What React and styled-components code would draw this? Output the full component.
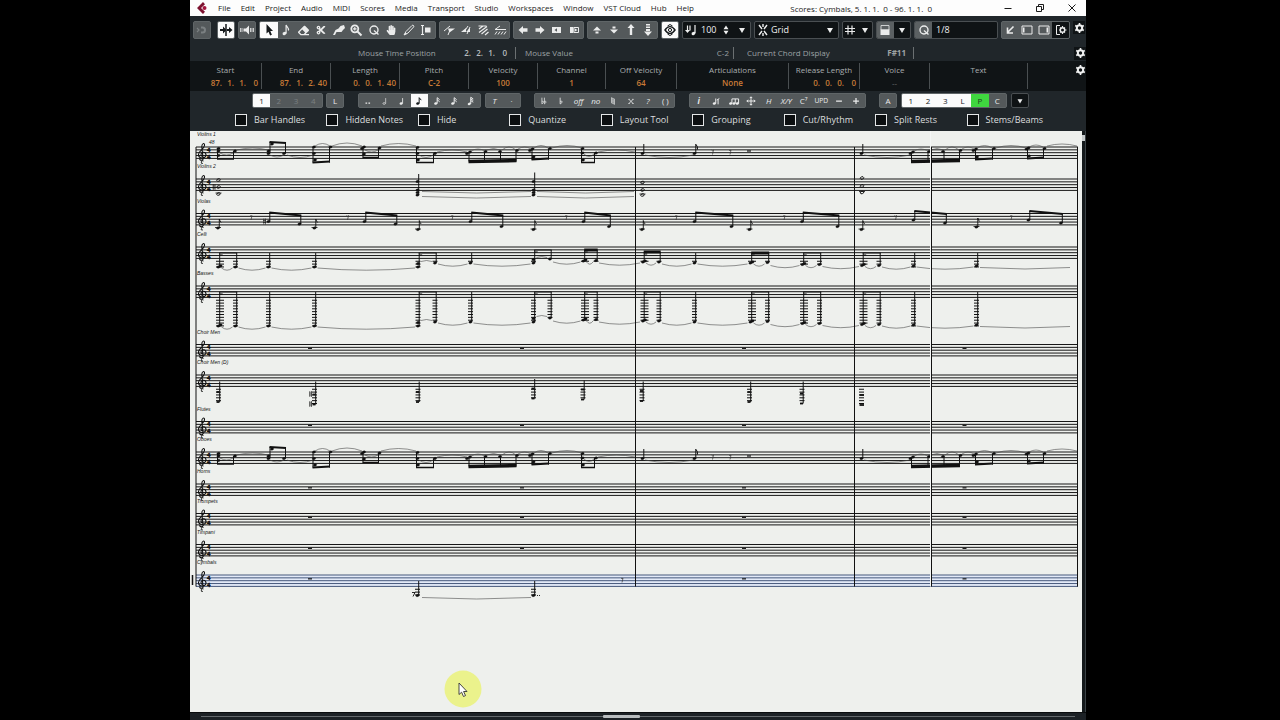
import React from 'react';
import styled, { createGlobalStyle, css } from 'styled-components';
import { FaHandPaper, FaEraser, FaCut } from 'react-icons/fa';

const GlobalStyle = createGlobalStyle`
  * {
    box-sizing: border-box;
  }

  body {
    margin: 0;
    background: #000;
    font-family: 'Open Sans', 'Noto Sans', sans-serif;
  }

  button, input, select {
    font-family: inherit;
    color: inherit;
    margin: 0;
    padding: 0;
    border: 0;
    background: none;
  }
`;

const Screen = styled.div`
  display: grid;
  grid-template-columns: 190fr 896fr 194fr;
  min-height: 100vh;
  background: #000;
`;

const Window = styled.div`
  grid-column: 2;
  display: flex;
  flex-direction: column;
  min-width: 0;
  overflow: hidden;
  background: #20262a;
  color: #d5d8d9;
`;

const TitleBar = styled.header`
  display: flex;
  align-items: center;
  height: 16px;
  padding: 0 8px 0 6px;
  background: #fdfdfd;
  color: #1b1b1b;
  font-size: 8px;
`;

const Logo = styled.svg`
  width: 12px;
  height: 12px;
  margin-right: 10px;
`;

const Menu = styled.nav`
  display: flex;
  gap: 10px;
`;

const MenuItem = styled.button`
  font-size: 8px;
  line-height: 16px;
  white-space: nowrap;
`;

const WindowTitle = styled.div`
  flex: 1;
  text-align: right;
  white-space: pre;
`;

const WindowControls = styled.div`
  display: flex;
  gap: 20px;
  margin-left: 70px;
`;

const WindowButton = styled.button`
  display: flex;
  width: 12px;
  height: 12px;
`;

const Toolbar = styled.div`
  display: flex;
  gap: 3px;
  height: 28px;
  padding: 5px 0 5px 3px;
  overflow: hidden;
`;

const Group = styled.div`
  display: flex;
  flex: none;
  width: ${props => props.$width}px;
  margin-left: ${props => props.$before || 0}px;
  border: 1px solid ${props => (props.$dark ? '#4a4f52' : '#5f6567')};
  border-radius: 2px;
  overflow: hidden;
  background: ${props => (props.$dark ? '#0f1315' : '#54595b')};
`;

const tones = {
  on: css`
    background: #fbfbfb;
    color: #15191b;
  `,
  green: css`
    background: #3fd63f;
    color: #1d3c1d;
  `,
  dark: css`
    background: #0f1315;
  `,
  lit: css`
    background: #5b6062;
  `,
  dim: css`
    color: #7b8082;
  `,
};

const ToolButton = styled.button`
  display: flex;
  flex: ${props => (props.$fixed ? 'none' : '1')};
  align-items: center;
  justify-content: center;
  width: ${props => (props.$fixed ? '17px' : 'auto')};
  min-width: 0;
  color: #ebecec;
  font-size: 8px;
  line-height: 12px;
  ${props => tones[props.$tone]}
`;

const Glyph = styled.svg`
  flex: none;
  width: ${props => (props.$small ? 10 : 12)}px;
  height: ${props => (props.$small ? 10 : 12)}px;
  overflow: visible;
`;

const Field = styled.label`
  display: flex;
  flex: 1;
  align-items: center;
  gap: 2px;
  min-width: 0;
  padding: 0 2px;
  color: #f0f1f1;
`;

const TextBox = styled.input`
  flex: 1;
  width: 0;
  min-width: 0;
  padding-left: 2px;
  font-size: 9px;
  line-height: 14px;
`;

const Select = styled.select`
  flex: 1;
  width: 0;
  min-width: 0;
  font-size: 9px;
  line-height: 14px;
  appearance: none;
`;

const StatusLine = styled.div`
  display: grid;
  grid-template-columns: 326fr 218fr 180fr 160fr 12px;
  align-items: center;
  height: 17px;
  padding-top: 1px;
  color: #9da2a4;
  font-size: 8px;
  line-height: 12px;
`;

const StatusCell = styled.div`
  display: flex;
  justify-content: space-between;
  padding: 0 ${props => props.$end}px 0 ${props => props.$start}px;
  border-right: 1px solid #6b7072;
  white-space: nowrap;
`;

const GearButton = styled.button`
  display: flex;
  align-items: center;
  width: 12px;
  height: 13px;
  overflow: hidden;
  background: #0f1315;
  color: #f0f1f1;
`;

const InfoLine = styled.div`
  display: grid;
  grid-template-columns: 72fr 69fr 69fr 69fr 69fr 68fr 71fr 112fr 71fr 70fr 98fr 46fr 12px;
  height: 30px;
  padding: 2px 0;
  background: #101416;
  font-size: 8px;
`;

const InfoCell = styled.div`
  display: flex;
  flex-direction: column;
  align-items: center;
  border-right: 1px solid #4a4f51;
  color: #a9adaf;
  line-height: 13px;
  white-space: nowrap;
`;

const InfoValue = styled.span`
  color: ${props => (props.$muted ? '#6a6e70' : '#c97b36')};
  font-weight: ${props => (props.$muted ? 400 : 600)};
`;

const Time = styled.span`
  display: flex;
  align-self: flex-end;
  padding-right: 3px;
  color: ${props => (props.$plain ? '#b9bdbf' : '#c97b36')};
  font-weight: 600;
`;

const TimePart = styled.span`
  width: 12px;
  text-align: right;
`;

const SymbolBar = styled.div`
  display: flex;
  height: 19px;
  padding: 2px 0 2px 62px;
  overflow: hidden;
`;

const Filters = styled.div`
  display: grid;
  grid-template-columns: repeat(9, 1fr);
  align-items: center;
  height: 21px;
  padding: 0 28px 1px 45px;
`;

const Filter = styled.label`
  display: flex;
  align-items: center;
  gap: 7px;
  color: #dcdedf;
  font-size: 9px;
  line-height: 14px;
  white-space: nowrap;
`;

const CheckBox = styled.input`
  flex: none;
  width: 12px;
  height: 12px;
  border: 1px solid #e4e6e7;
  background: #0c0f11;
  appearance: none;
`;

const Workspace = styled.div`
  display: flex;
  flex: 1;
  min-height: 0;
`;

const Page = styled.main`
  position: relative;
  flex: 1;
  min-width: 0;
  overflow: hidden;
  background: #eef0ed;
`;

const Sheet = styled.svg`
  display: block;
  width: 100%;
  font-family: 'Liberation Sans', Arial, sans-serif;
`;

const Pointer = styled.svg`
  position: absolute;
  left: calc(31% - 23px);
  bottom: 4px;
  width: 38px;
  height: 38px;
`;

const VerticalScroll = styled.div`
  width: 4px;
  padding-top: 4px;
  border-right: 1px solid #3b4246;
  background: #14191b;
`;

const VerticalThumb = styled.div`
  height: 6px;
  background: #c6cacb;
`;

const HorizontalScroll = styled.div`
  display: flex;
  align-items: center;
  height: 8px;
  padding: 0 11px;
  border-top: 1px solid #0a0c0d;
  background: #1c2125;
`;

const Track = styled.div`
  flex: ${props => props.$share};
  height: 1px;
  background: #63686b;
`;

const HorizontalThumb = styled.div`
  width: 37px;
  height: 3px;
  border-radius: 1px;
  background: #b9bdbf;
`;

const stroke = { fill: 'none', stroke: 'currentColor', strokeWidth: 1.2 };
const solid = { fill: 'currentColor', stroke: 'none' };

const noteHead = (x, y) => <ellipse cx={x} cy={y} rx="2" ry="1.5" transform={`rotate(-20 ${x} ${y})`} {...solid} />;

const glyphs = {
  constrain: (
    <>
      <path d="M5 2.500h1.500a3.500 3.500 0 0 1 0 7H5V7.500h1.500a1.500 1.500 0 0 0 0-3H5z" {...solid} />
      <path d="M1 4l2 2-2 2" {...stroke} />
    </>
  ),
  autoscroll: (
    <>
      <path d="M6 0v12" {...stroke} strokeWidth="1.500" />
      <path d="M0 5h3V2.500L6.500 6 3 9.500V7H0zM7 5h2V3l3.500 3L9 9V7H7z" {...solid} />
    </>
  ),
  speaker: (
    <>
      <path d="M2.500 4.500h2.500L8 1.500v9L5 7.500H2.500z" {...solid} />
      <path d="M1 4v4M-.5 4v4M9.500 4v4M11 4v4M12.500 4v4" {...stroke} strokeWidth=".8" />
    </>
  ),
  arrow: <path d="M3.500 0v9.500l2-1.800 1.600 3.800 1.800-.8L7.300 7.100H10z" {...solid} />,
  note: (
    <>
      {noteHead(4.500, 9.500)}
      <path d="M6.100 9.500V1c.5 2 3 2.500 2.300 5.500" {...stroke} />
    </>
  ),
  glue: <path d="M0 11l2.500-5 3-1.500L7.500 2 11 1l1 3-2 2-1.500 2H5.500L3.500 8 2 11z" {...solid} />,
  zoom: (
    <>
      <circle cx="4.800" cy="4.800" r="3.500" {...stroke} strokeWidth="1.800" />
      <path d="M7.500 7.500L11.500 11.500" {...stroke} strokeWidth="2" />
      <path d="M3 4.800h3.600M4.800 3v3.600" {...stroke} />
    </>
  ),
  quantize: (
    <>
      <circle cx="6" cy="6" r="4" {...stroke} strokeWidth="1.400" />
      <path d="M6 6.500l4.500 4" {...stroke} strokeWidth="1.400" />
    </>
  ),
  pencil: (
    <>
      <path d="M1 11l2-3.500L9 1.500c1-1 2.500.5 1.600 1.500L5 9z" {...stroke} strokeWidth="1" />
      <path d="M1 11l3-1L2.500 8.500z" {...solid} />
    </>
  ),
  trim: (
    <>
      <path d="M1 1.500h3M1 10.500h3M2.500 1.500v9" {...stroke} />
      <path d="M5 3.500h5.500v5H5z" {...solid} />
    </>
  ),
  scissorNote: (
    <>
      <path d="M1 7l6-5M5 11l2-5" {...stroke} strokeWidth="1" />
      <path d="M5 4.500h7L6.500 8.500z" {...solid} />
    </>
  ),
  splitNote: (
    <>
      <path d="M4 8l4-6M7 10l3-7" {...stroke} strokeWidth="1" />
      <path d="M1 8l5-4v4zM6 8l4-4v4z" {...solid} />
    </>
  ),
  hatch: <path d="M2 5l4-3M2 8.500l8-6M4.500 10l6-5M8 11l3.500-3M1.500 2h8" {...stroke} />,
  hatchFlat: <path d="M1 5.500h11M1 5.500L6 2M1 10.500l2-3M4 10.500l2-3M7 10.500l2-3M10 10.500l2-3" {...stroke} strokeWidth="1" />,
  left: <path d="M1.500 6L6 2v2.300h4.500v3.400H6V10z" {...solid} />,
  right: <path d="M10.500 6L6 2v2.300H1.500v3.400H6V10z" {...solid} />,
  boxLeft: (
    <>
      <path fillRule="evenodd" d="M1 3h6v6H1zM6 4.200L3.500 6 6 7.800z" {...solid} />
      <path d="M7 3h3v6H7z" {...solid} />
    </>
  ),
  boxRight: (
    <>
      <path d="M2 3h3.500v6H2z" {...solid} />
      <path d="M6 3.500h4.500v5H6z" {...stroke} strokeWidth="1" />
      <path d="M7 4.500L9.500 6 7 7.500z" {...solid} />
    </>
  ),
  up: <path d="M6 2.500L10 6.500H2zM4.500 7.500h3v2h-3z" {...solid} />,
  down: <path d="M6 9.500L2 5.500h8zM4.500 2.500h3v2h-3z" {...solid} />,
  upLong: <path d="M6 0l3.500 4H7.200v7H4.800V4H2.500z" {...solid} />,
  downLong: <path d="M6 12L2 7.500h8zM4 5h4v2H4zM4 2.500h4V4H4zM4 0h4v1.500H4z" {...solid} />,
  eye: (
    <>
      <path d="M1 6c3-4.500 7-4.500 10 0-3 4.500-7 4.500-10 0z" {...stroke} strokeWidth="1.400" />
      <circle cx="6" cy="6" r="1.600" {...stroke} strokeWidth="1" />
      <path d="M3.500 2L6 .5 8.500 2M3.500 10L6 11.500 8.500 10" {...stroke} strokeWidth="1" />
    </>
  ),
  insertVelocity: (
    <>
      <path d="M2.500 1.500v6M5 1.500v5M10 1v8" {...stroke} />
      <path d="M0 6h5L2.500 9z" {...solid} />
      {noteHead(8.500, 9.500)}
    </>
  ),
  spin: <path d="M6 .5L9 5H3zM6 11.500L3 7h6z" {...solid} />,
  caret: <path d="M3 4h6L6 9z" {...solid} />,
  snap: <path d="M6 0v3M6 9v3M2 1l3 4M10 1L7 5M2 11l3-4M10 11L7 7" {...stroke} strokeWidth="1.400" />,
  hash: <path d="M4 1.500v9M8 1.500v9M1 4.500h10M1 7.500h10" {...stroke} />,
  zones: (
    <>
      <path d="M2 1.500h8V6H2z" {...stroke} strokeWidth=".8" />
      <path d="M1.500 5.500h9V11h-9z" {...solid} />
    </>
  ),
  corner: <path d="M9.500 2.500L4 8M3.500 3.500V9H9" {...stroke} strokeWidth="1.600" />,
  paneLeft: (
    <>
      <path d="M1 2h10v8H1z" {...stroke} strokeWidth="1" />
      <path d="M2 3.500h1.500v5H2z" {...solid} />
    </>
  ),
  paneRight: (
    <>
      <path d="M1 2h10v8H1z" {...stroke} strokeWidth="1" />
      <path d="M8.500 3.500H10v5H8.500z" {...solid} />
    </>
  ),
  setup: (
    <>
      <path d="M5 1.500H1.500v9H5" {...stroke} strokeWidth="1" />
      <circle cx="7.500" cy="6" r="2.200" {...stroke} strokeWidth="1.400" />
      <path d="M7.500 2v1.500M7.500 8.500V10M4 6h1M10 6h1.500M5 3.500l1 1M10 3.500l-1 1M5 8.500l1-1M10 8.500l-1-1" {...stroke} />
    </>
  ),
  gear: (
    <>
      <circle cx="6.500" cy="6" r="2.700" {...stroke} strokeWidth="2" />
      <path d="M6.500 1v2M6.500 9v2M2.200 3.500l1.700 1M9.100 7.500l1.700 1M2.200 8.500l1.700-1M9.100 4.500l1.700-1" {...stroke} strokeWidth="1.600" />
    </>
  ),
  whole: <path d="M3 8.500h2M6.500 8.500h2" {...stroke} strokeWidth="1.500" />,
  half: (
    <>
      <ellipse cx="5" cy="9" rx="1.500" ry="1" {...stroke} strokeWidth=".8" />
      <path d="M6.800 9V2.500" {...stroke} strokeWidth=".8" />
    </>
  ),
  quarter: (
    <>
      {noteHead(5, 9)}
      <path d="M6.700 9V2.500" {...stroke} strokeWidth="1" />
    </>
  ),
  eighth: (
    <>
      {noteHead(4.500, 9)}
      <path d="M6.200 9V2l2.500 3" {...stroke} />
    </>
  ),
  sixteenth: (
    <>
      {noteHead(4.500, 9)}
      <path d="M6.200 9V2l3 2.500M6.200 4.500l3 2.500" {...stroke} />
    </>
  ),
  thirtySecond: (
    <>
      {noteHead(4, 9.500)}
      <path d="M5.700 9.500V1.500l3 2M5.700 3.500l3 2M5.700 5.500l3 2" {...stroke} />
    </>
  ),
  flat: <path d="M5 2v7.500c3-1.500 3.500-4 0-3" {...stroke} strokeWidth="1" />,
  doubleFlat: <path d="M3.500 2v7.500c2.500-1.500 2.500-4 0-3M6.500 2v7.500c2.500-1.500 2.500-4 0-3" {...stroke} strokeWidth=".9" />,
  natural: <path d="M4.500 1.500v7h3M7.500 10.500v-7h-3M4.500 6h3" {...stroke} strokeWidth="1" />,
  doubleSharp: <path d="M3.500 4l5 5M8.500 4l-5 5M3 4h1.500M7.500 4H9M3 9h1.500M7.500 9H9" {...stroke} strokeWidth="1" />,
  flipStems: (
    <>
      {noteHead(4, 9)}
      <path d="M5.700 9V3M8.500 10V4M7 5l3-2" {...stroke} />
    </>
  ),
  beamed: (
    <>
      {noteHead(2, 9)}
      {noteHead(6, 9)}
      <path d="M3.500 9V3.500h8V9M7.500 9V3.500" {...stroke} />
      {noteHead(10, 9)}
    </>
  ),
  move: <path d="M6 1v10M1 6h10M4.500 2.500L6 1l1.500 1.500M4.500 9.500L6 11l1.500-1.500M2.500 4.500L1 6l1.500 1.500M9.500 4.500L11 6 9.500 7.500" {...stroke} />,
  minus: <path d="M2.500 6h7" {...stroke} strokeWidth="1.500" />,
  plus: <path d="M2.500 6h7M6 2.500v7" {...stroke} strokeWidth="1.500" />,
  minimize: <path d="M2.500 6.500h7" {...stroke} strokeWidth="1" />,
  restore: <path d="M2.500 4.500h5v5h-5zM4.500 4.500v-2h5v5h-2" {...stroke} strokeWidth="1" />,
  close: <path d="M2.500 2.500l7 7M9.500 2.500l-7 7" {...stroke} strokeWidth="1" />,
};

const Icon = ({ name, small }) => (
  <Glyph viewBox="0 0 12 12" aria-hidden="true" $small={small}>{glyphs[name]}</Glyph>
);

const IconGroup = ({ width, before, dark, small, items }) => (
  <Group $width={width} $before={before} $dark={dark}>
    {items.map(([label, content, tone]) => (
      <ToolButton key={label} type="button" aria-label={label} $tone={tone}>
        {typeof content === 'string' && glyphs[content] ? <Icon name={content} small={small} /> : content}
      </ToolButton>
    ))}
  </Group>
);

const menus = ['File', 'Edit', 'Project', 'Audio', 'MIDI', 'Scores', 'Media', 'Transport', 'Studio', 'Workspaces', 'Window', 'VST Cloud', 'Hub', 'Help'];

const tools = [
  ['Object Selection', 'arrow', 'on'],
  ['Insert Note', 'note'],
  ['Erase', <FaEraser size={11} />],
  ['Split', <FaCut size={10} />],
  ['Glue', 'glue'],
  ['Zoom', 'zoom'],
  ['Display Quantize', 'quantize'],
  ['Hand', <FaHandPaper size={10} />],
  ['Export', 'pencil'],
  ['Trim', 'trim'],
];

const noteEdits = [
  ['Cut Notes', 'scissorNote'],
  ['Split Notes', 'splitNote'],
  ['Crescendo', 'hatch'],
  ['Hairpin', 'hatchFlat'],
];

const nudges = [
  ['Move Left', 'left'],
  ['Move Right', 'right'],
  ['Start Left', 'boxLeft'],
  ['End Right', 'boxRight'],
];

const transposes = [
  ['Step Up', 'up'],
  ['Step Down', 'down'],
  ['Octave Up', 'upLong'],
  ['Octave Down', 'downLong'],
];

const info = [
  { label: 'Start', time: ['87.', '1.', '1.', '0'] },
  { label: 'End', time: ['87.', '1.', '2.', '40'] },
  { label: 'Length', time: ['0.', '0.', '1.', '40'] },
  { label: 'Pitch', value: 'C-2' },
  { label: 'Velocity', value: '100' },
  { label: 'Channel', value: '1' },
  { label: 'Off Velocity', value: '64' },
  { label: 'Articulations', value: 'None' },
  { label: 'Release Length', time: ['0.', '0.', '0.', '0'] },
  { label: 'Voice', value: '--', muted: true },
  { label: 'Text', value: '' },
];

const filters = ['Bar Handles', 'Hidden Notes', 'Hide', 'Quantize', 'Layout Tool', 'Grouping', 'Cut/Rhythm', 'Split Rests', 'Stems/Beams'];

const TimeValue = ({ parts, plain }) => (
  <Time $plain={plain}>
    {parts.map((part, i) => <TimePart key={i}>{part} </TimePart>)}
  </Time>
);

// ---- score ----

const INK = '#111';
const GAP = 2.85;

const staves = [
  { name: 'Violins 1', y: 16, label: 5 },
  { name: 'Violins 2', y: 48, label: 37 },
  { name: 'Violas', y: 82.5, label: 72 },
  { name: 'Celli', y: 116, label: 105 },
  { name: 'Basses', y: 155, label: 144 },
  { name: 'Choir Men', y: 213.5, label: 203, resting: true },
  { name: 'Choir Men (D)', y: 244, label: 233 },
  { name: 'Flutes', y: 290.5, label: 280, resting: true },
  { name: 'Oboes', y: 321, label: 310 },
  { name: 'Horns', y: 353, label: 342, resting: true },
  { name: 'Trumpets', y: 382.5, label: 372, resting: true },
  { name: 'Timpani', y: 413.5, label: 403, resting: true },
  { name: 'Cymbals', y: 444, label: 433, selected: true },
];

const Head = ({ x, y, open }) => (
  <ellipse
    cx={x}
    cy={y}
    rx="1.8"
    ry="1.2"
    transform={`rotate(-18 ${x} ${y})`}
    fill={open ? 'none' : INK}
    stroke={INK}
    strokeWidth={open ? 0.9 : 0.2}
  />
);

const Stem = ({ x, from, to }) => <path d={`M${x} ${from}V${to}`} stroke={INK} strokeWidth="1" />;

const Beam = ({ x1, y1, x2, y2, weight = 1.5 }) => (
  <path d={`M${x1 - 0.5} ${y1}L${x2 + 0.5} ${y2}`} stroke={INK} strokeWidth={weight} />
);

const Slur = ({ x1, x2, y, bend }) => (
  <path d={`M${x1} ${y}Q${(x1 + x2) / 2} ${y + bend * 2} ${x2} ${y}`} fill="none" stroke="#4a4a4a" strokeWidth="0.6" />
);

const EighthRest = ({ x, y }) => (
  <path d={`M${x - 1} ${y - 2}q1 1.500 2 0l-1 4.500`} fill="none" stroke="#333" strokeWidth="0.7" />
);

const BarRest = ({ x, y }) => <path d={`M${x - 2} ${y}h4`} stroke={INK} strokeWidth="1.200" />;

const Sharp = ({ x, y }) => (
  <path d={`M${x - 0.7} ${y - 3}v6M${x + 1} ${y - 3}v6M${x - 1.5} ${y - 1}h3M${x - 1.5} ${y + 1}h3`} stroke={INK} strokeWidth="0.6" />
);

const Ledgers = ({ x, to, wide }) => {
  const lines = [];
  for (let y = 5 * GAP; y < to + 1; y += GAP) {
    lines.push(`M${x - 2.5} ${y}h${wide ? 8 : 5}`);
  }
  return <path d={lines.join('')} stroke={INK} strokeWidth="1" />;
};

const Clef = () => (
  <g fill="none" stroke={INK}>
    <path
      d="M13 12.500c-1.500 1.500-4 .5-3-1M13.200 12.500L11.800 0c-.2-3.500 3-5 2.700-1.500C14 2 8.500 4 8.500 7.500c0 4.500 7.500 4.500 7.500.5 0-3.500-5-3.500-5-.5 0 1.200.8 1.800 1.600 1.900"
      strokeWidth="1.100"
    />
    <path d="M13.500 14c-2-.8-2.500.5-1.500 1-1.500.5-1 2 1 1.300" strokeWidth="0.9" />
  </g>
);

const Meter = () => (
  <g fill={INK} stroke={INK} strokeWidth="0.4" fontSize="6" fontWeight="700">
    <text x="17" y="4.800">4</text>
    <text x="17" y="11.500">4</text>
  </g>
);

const melodyGroups = [
  { heads: [[28.5, 1.5], [28.5, 4], [28.5, 8.5], [45, 4]], stems: [[27.5, 1.5], [43.5, 4]], beam: [12, 12] },
  { heads: [[78.5, 4], [78.5, 6.5], [94, 6.5], [82, -3]], stems: [[80, 6], [95.5, 6.5]], beam: [-5, -4], weight: 2 },
  { heads: [[124, 0], [124, 6.5], [125, 13], [140.5, 0]], stems: [[123, 0], [139.5, 0]], beam: [15.5, 14.5], weight: 2 },
  { heads: [[172, 1.5], [174, 0], [174, 7], [189.5, 1]], stems: [[173, 0], [188.5, 1]], beam: [10.5, 10.5] },
  { heads: [[227.5, 0.5], [227.5, 6.5], [228, 13], [245, 6.5]], stems: [[226.5, 0], [243.5, 6.5]], beam: [15.5, 15.5] },
  { heads: [[277, 6.5], [280, 5], [295.5, 4.5], [310, 4.5], [327, 3.5]], stems: [[279, 5], [294.5, 4.5], [310.5, 4.5], [326, 3.5]], beam: [14.5, 13.5], weight: 3.5 },
  { heads: [[340, 3.5], [342.5, 2], [343.5, 10], [360, 1.5]], stems: [[342, 2], [358.5, 1.5]], beam: [12.5, 11.5], weight: 2 },
  { heads: [[392.5, 1.5], [392.5, 6], [393, 13], [406, 6]], stems: [[391.5, 1.5], [404.5, 6]], beam: [15.5, 15.5] },
  { heads: [[720.5, 6.5], [723, 5], [739, 4.5], [753, 4.5], [770.5, 3.5]], stems: [[721.5, 5], [738, 4.5], [754, 4.5], [769.5, 3.5]], beam: [14.5, 13.5], weight: 3.5 },
  { heads: [[783.5, 3.5], [786, 2], [787, 10], [804, 1.5]], stems: [[785.5, 2], [802.5, 1.5]], beam: [12.5, 11.5], weight: 2 },
  { heads: [[836.5, 2], [838.5, 1], [839, 9], [854.5, 1.5]], stems: [[837.5, 1], [853.5, 1.5]], beam: [11.5, 10.5], weight: 2 },
];

const melodySlurs = [
  [30, 43, 6, 2], [47, 78, 3, -2], [80, 94, 8, 2], [97, 123, 8, 2.5], [125, 140, -1, -2.5],
  [142, 172, -1, -3], [175, 188, 3, 2], [191, 226, -1, -2.5], [229, 243, 8, 2.5], [247, 277, 5, -2],
  [281, 295, 4, -2], [297, 310, 3, -1.5], [312, 326, 3, -3], [328, 341, 2, -2], [344, 358, 1, -2.5],
  [362, 392, 1, -2.5], [394, 404, 7, 2.5], [408, 445, 5, -2], [455, 503, 8, 2.5], [674, 720, 8, 2.5],
  [724, 738, 4, -2], [741, 753, 3, -1.5], [755, 769, 3, -3], [772, 784, 2, -2], [787, 802, 1, -2.5],
  [806, 836, 1, -2.5], [839, 853, 0, -2], [857, 887, -1, -2],
];

const Melody = () => (
  <>
    {melodyGroups.map(({ heads, stems, beam, weight }, i) => (
      <g key={i}>
        {heads.map(([x, y]) => <Head key={`${x}-${y}`} x={x} y={y} />)}
        {stems.map(([x, y]) => <Stem key={x} x={x} from={y} to={beam[0]} />)}
        <Beam x1={stems[0][0]} y1={beam[0]} x2={stems[stems.length - 1][0]} y2={beam[1]} weight={weight} />
      </g>
    ))}
    {melodySlurs.map(([x1, x2, y, bend]) => <Slur key={x1} x1={x1} x2={x2} y={y} bend={bend} />)}
    {[452.5, 504.5, 671.5].map(x => (
      <g key={x}>
        <Head x={x} y={6.5} />
        <Stem x={x + 1.3} from={6.5} to={-3} />
      </g>
    ))}
    <path d="M506-2.500q2 2 1.500 5" fill="none" stroke={INK} />
    <EighthRest x={522.5} y={5} />
    <EighthRest x={540} y={5} />
    <BarRest x={559} y={4} />
  </>
);

const Sustained = () => (
  <>
    {[[28, [1, 8, 15]], [452, [3.5, 11, 16]], [671.5, [-1, 7, 13.5]]].map(([x, heads]) => (
      <g key={x}>
        {heads.map(y => <Head key={y} x={x + 0.5} y={y} open />)}
        <path d={`M${x - 2.5} ${heads[2] - 1}h6`} stroke={INK} strokeWidth="0.8" />
      </g>
    ))}
    <Sharp x={24} y={8} />
    {[[227.5, -5], [343.5, -6.5]].map(([x, top]) => (
      <g key={x}>
        {[2.5, 11, 13.5, 16].map(y => <Head key={y} x={x} y={y} />)}
        <Stem x={x + 1.2} from={16} to={top} />
      </g>
    ))}
    <Slur x1={232} x2={341} y={12.5} bend={1.5} />
    <Slur x1={232} x2={341} y={17.5} bend={1.5} />
    <Slur x1={347} x2={444} y={12.5} bend={1.5} />
    <Slur x1={347} x2={444} y={17.5} bend={1.5} />
  </>
);

const offBeats = [
  [28, 14.5], [124.5, 14.5], [228, 16], [343.5, 16], [452, 16], [559.5, 16], [671.5, 16], [786.5, 13.5],
];

const offBeatPairs = [
  [78.5, 8, 109.5, 10.5], [174.5, 8, 205.5, 10.5], [280.5, 8, 311.5, 13], [393.5, 8, 419, 13],
  [504.5, 8, 541.5, 13], [612, 8, 647.5, 13], [723.5, 6.5, 755, 9.5], [838.5, 6.5, 871, 9.5],
];

const OffBeats = () => (
  <>
    {offBeats.map(([x, y]) => (
      <g key={x}>
        <Head x={x} y={y} />
        <path d={`M${x - 3} ${y - 0.5}h6`} stroke={INK} strokeWidth="0.8" />
        <path d={`M${x + 1.3} ${y}V${y - 9}q.5 2 1.800 3.500`} fill="none" stroke={INK} strokeWidth="0.9" />
      </g>
    ))}
    {[61, 157.5, 262, 376, 486, 594, 705.5, 821].map(x => <EighthRest key={x} x={x} y={4} />)}
    {offBeatPairs.map(([x1, y1, x2, y2]) => {
      const top = y1 < 7 ? -2.5 : -1;
      return (
        <g key={x1}>
          <Head x={x1} y={y1} />
          <Head x={x2} y={y2} />
          <Stem x={x1 + 1.3} from={y1} to={top} />
          <Stem x={x2 + 1.3} from={y2} to={top + 3} />
          <Beam x1={x1 + 1.3} y1={top} x2={x2 + 1.3} y2={top + 3} weight={1.8} />
        </g>
      );
    })}
    <Sharp x={74.5} y={8} />
  </>
);

const lowNotes = [
  { at: [[28.5, 20], [45.5, 20]], top: 6 },
  { at: [[78.5, 20]], top: 6 },
  { at: [[124.5, 20]], top: 6 },
  { at: [[228, 20], [245, 16]], top: 6, double: true },
  { at: [[280.5, 16]], top: 6 },
  { at: [[343.5, 16], [360, 12]], top: 3, double: true },
  { at: [[393.5, 14], [406, 13.5]], top: 3, thick: true },
  { at: [[453, 15], [469, 15]], top: 5, thick: true },
  { at: [[504.5, 16]], top: 6 },
  { at: [[560.5, 16], [577.5, 15.5]], top: 6, thick: true },
  { at: [[612.5, 17.5], [629.5, 17.5]], top: 6 },
  { at: [[672, 18.5], [689, 18.5]], top: 6 },
  { at: [[723.5, 19]], top: 6 },
  { at: [[786.5, 19]], top: 6 },
];

const LowStrings = ({ shift = 0 }) => {
  const notes = lowNotes.flatMap(group => group.at);
  return (
    <>
      {lowNotes.map(({ at, top, double, thick }) => {
        const beamY = shift ? 6 : top;
        return (
          <g key={at[0][0]}>
            {at.map(([x, y], i) => (
              <g key={x}>
                <Head x={x} y={y + shift} />
                {i === 0 && double && <Head x={x} y={y + shift - 3.5} />}
                {i === 0 && at.length > 1 && !double && <Head x={x + 2} y={y + shift - 1} />}
                <Stem x={x + 1.2} from={y + shift} to={beamY} />
                <Ledgers x={x} to={y + shift} wide={i === 0 && at.length > 1 && !double} />
              </g>
            ))}
            {at.length > 1 && (
              <Beam x1={at[0][0] + 1.2} y1={beamY} x2={at[1][0] + 1.2} y2={beamY} weight={thick && !shift ? 3 : 1} />
            )}
            {at.length > 1 && <path d={`M${at[0][0] + 1.2} ${beamY + 2}h3`} stroke={INK} />}
          </g>
        );
      })}
      {notes.slice(0, -1).map(([x, y], i) => {
        const [nextX, nextY] = notes[i + 1];
        const rising = nextY <= y - 4 && nextX - x < 20;
        return (
          <Slur
            key={x}
            x1={x + 3}
            x2={nextX - 3}
            y={rising ? nextY + shift - 1.5 : Math.max(y, nextY) + shift + 1}
            bend={rising ? -1 : 2.2}
          />
        );
      })}
      <Slur x1={790} x2={880} y={20.5 + shift} bend={1.5} />
    </>
  );
};

const choir = [
  [28.5, 6.5, 27], [124.5, 6.5, 29.5], [228, 6.5, 27], [343.5, 4, 23.5], [393, 5.5, 24.5],
  [452, 6.5, 26], [559.5, 6.5, 27], [612, 6.5, 28.5], [671.5, null, 30],
];

const Choir = () => (
  <>
    {choir.map(([x, top, low]) => (
      <g key={x}>
        <Ledgers x={x} to={low - 1} />
        {[low - 10, low].map(y => (
          <path key={y} d={`M${x - 2} ${y}h${top === null ? 4.5 : 3}`} stroke={INK} strokeWidth="1.800" />
        ))}
        {top !== null && <Stem x={x + 1.2} from={low} to={top} />}
      </g>
    ))}
    <Sharp x={120.5} y={19} />
    <Sharp x={120.5} y={29} />
  </>
);

const Cymbals = () => (
  <>
    {[227.5, 343.5].map(x => (
      <g key={x}>
        <Ledgers x={x} to={20} />
        <Head x={x} y={20.5} />
        <Stem x={x + 1.2} from={20.5} to={6} />
      </g>
    ))}
    <path d="M222 17.500h3l-2 4M347 20.500h1M349 20.500h1" fill="none" stroke={INK} strokeWidth="0.9" />
    <Slur x1={232} x2={341} y={22.5} bend={1.5} />
    <EighthRest x={432} y={5} />
  </>
);

const parts = {
  'Violins 1': <Melody />,
  'Violins 2': <Sustained />,
  Violas: <OffBeats />,
  Celli: <LowStrings />,
  Basses: <LowStrings shift={20} />,
  'Choir Men (D)': <Choir />,
  Oboes: <Melody />,
  Cymbals: <Cymbals />,
};

const Staff = ({ staff }) => (
  <>
    <text x="7" y={staff.label} fontSize="5" fontStyle="italic" fill={INK}>{staff.name}</text>
    <g transform={`translate(0 ${staff.y})`}>
      {staff.selected && <path d="M6 0h882v11.400H6z" fill="#e3eaf8" />}
      {[0, 1, 2, 3, 4].map(line => (
        <path key={line} d={`M6 ${line * GAP}H888`} stroke={staff.selected ? '#46587a' : '#161616'} strokeWidth="1" />
      ))}
      <Clef />
      <Meter />
      {(staff.resting || staff.selected) && [120, 554, 774.5].map(x => <BarRest key={x} x={x} y={GAP + 1} />)}
      {staff.resting && <BarRest x={332} y={GAP + 1} />}
      {parts[staff.name]}
    </g>
  </>
);

const Score = () => (
  <Sheet viewBox="0 0 892 581" preserveAspectRatio="xMinYMin meet" role="img" aria-label="Orchestral score">
    {staves.map(staff => <Staff key={staff.name} staff={staff} />)}
    <text x="19" y="13" fontSize="5" fontStyle="italic" fill={INK}>48</text>
    {[6, 445.5, 664.5, 887.5].map(x => (
      <path key={x} d={`M${x} 16V455.500`} stroke={INK} strokeWidth="1" />
    ))}
    <path d="M740.500 0V455.500" stroke="#f4f6f5" strokeWidth="1" />
    <path d="M741.500 16V455.500" stroke={INK} strokeWidth="1" />
    <path d="M2.500 444v10" stroke={INK} strokeWidth="1.500" />
  </Sheet>
);

const App = () => (
  <>
    <GlobalStyle />
    <Screen>
      <Window>
        <TitleBar>
          <Logo viewBox="0 0 12 12" aria-hidden="true">
            <path d="M7 0L1 6l6 6 2-2.200L5 6l4-3.800z" fill="#7d1230" />
            <circle cx="8.500" cy="6" r="2" fill="#a3153d" />
          </Logo>
          <Menu>
            {menus.map(item => <MenuItem key={item} type="button">{item}</MenuItem>)}
          </Menu>
          <WindowTitle>{'Scores: Cymbals, 5. 1. 1.  0 - 96. 1. 1.  0'}</WindowTitle>
          <WindowControls>
            <WindowButton type="button" aria-label="Minimize"><Icon name="minimize" /></WindowButton>
            <WindowButton type="button" aria-label="Restore"><Icon name="restore" /></WindowButton>
            <WindowButton type="button" aria-label="Close"><Icon name="close" /></WindowButton>
          </WindowControls>
        </TitleBar>

        <Toolbar>
          <IconGroup width={18} items={[['Constrain', 'constrain', 'dim']]} />
          <IconGroup width={18} before={3} items={[['Auto-Scroll', 'autoscroll', 'on']]} />
          <IconGroup width={18} items={[['Acoustic Feedback', 'speaker']]} />
          <IconGroup width={177} items={tools} />
          <IconGroup width={71} items={noteEdits} />
          <IconGroup width={71} items={nudges} />
          <IconGroup width={71} items={transposes} />
          <IconGroup width={18} items={[['Show Controllers', 'eye', 'on']]} />
          <Group $width={69} $dark>
            <Field>
              <Icon name="insertVelocity" />
              <TextBox aria-label="Insert Velocity" defaultValue="100" />
              <Icon name="spin" small />
            </Field>
            <ToolButton type="button" aria-label="Velocity Presets" $fixed><Icon name="caret" /></ToolButton>
          </Group>
          <Group $width={85} $dark>
            <Field>
              <Icon name="snap" />
              <Select aria-label="Snap Type" defaultValue="Grid">
                <option>Grid</option>
              </Select>
              <Icon name="caret" />
            </Field>
          </Group>
          <IconGroup width={31} dark items={[['Grid Type', 'hash'], ['Grid Options', 'caret']]} />
          <IconGroup width={35} dark items={[['Zones', 'zones', 'lit'], ['Zone Options', 'caret']]} />
          <Group $width={84} $dark>
            <ToolButton type="button" aria-label="Apply Quantize" $fixed $tone="lit"><Icon name="quantize" /></ToolButton>
            <Field>
              <TextBox aria-label="Quantize Preset" defaultValue="1/8" />
            </Field>
          </Group>
          <IconGroup
            width={69}
            items={[
              ['Open in Window', 'corner'],
              ['Show Left Zone', 'paneLeft'],
              ['Show Right Zone', 'paneRight'],
              ['Window Layout', 'setup', 'dark'],
            ]}
          />
          <GearButton type="button" aria-label="Toolbar Setup"><Icon name="gear" /></GearButton>
        </Toolbar>

        <StatusLine>
          <StatusCell $start={168} $end={5}>
            <span>Mouse Time Position</span>
            <TimeValue plain parts={['2.', '2.', '1.', '0']} />
          </StatusCell>
          <StatusCell $start={9} $end={4}>
            <span>Mouse Value</span>
            <span>C-2</span>
          </StatusCell>
          <StatusCell $start={13} $end={7}>
            <span>Current Chord Display</span>
            <strong>F#11</strong>
          </StatusCell>
          <span />
          <GearButton type="button" aria-label="Status Line Setup"><Icon name="gear" /></GearButton>
        </StatusLine>

        <InfoLine>
          {info.map(({ label, value, time, muted }) => (
            <InfoCell key={label}>
              <span>{label}</span>
              {time ? <TimeValue parts={time} /> : <InfoValue $muted={muted}>{value}</InfoValue>}
            </InfoCell>
          ))}
          <span />
          <GearButton type="button" aria-label="Info Line Setup"><Icon name="gear" /></GearButton>
        </InfoLine>

        <SymbolBar>
          <IconGroup width={71} items={[['Voice 1', '1', 'on'], ['Voice 2', '2', 'dim'], ['Voice 3', '3', 'dim'], ['Voice 4', '4', 'dim']]} />
          <IconGroup width={18} before={3} items={[['Lock', 'L']]} />
          <IconGroup
            width={123}
            before={14}
            small
            items={[
              ['Whole', 'whole'],
              ['Half', 'half'],
              ['Quarter', 'quarter'],
              ['Eighth', 'eighth', 'on'],
              ['Sixteenth', 'sixteenth'],
              ['Thirty-second', 'sixteenth'],
              ['Sixty-fourth', 'thirtySecond'],
            ]}
          />
          <IconGroup width={36} before={4} items={[['Triplet', <em>T</em>], ['Dotted', '·']]} />
          <IconGroup
            width={141}
            before={13}
            small
            items={[
              ['Double Flat', 'doubleFlat'],
              ['Flat', 'flat'],
              ['Off', <em>off</em>],
              ['No', <em>no</em>],
              ['Natural', 'natural'],
              ['Double Sharp', 'doubleSharp'],
              ['Enharmonic', <em>?</em>],
              ['Parentheses', '( )'],
            ]}
          />
          <IconGroup
            width={177}
            before={14}
            small
            items={[
              ['Get Info', <strong><em>i</em></strong>],
              ['Flip Stems', 'flipStems'],
              ['Group Notes', 'beamed'],
              ['Auto Layout', 'move'],
              ['Hide Notes', <em>H</em>],
              ['Position Info', <em>X/Y</em>],
              ['Make Chords', 'C⁷'],
              ['Update', <small>UPD</small>],
              ['Smaller', 'minus'],
              ['Larger', 'plus'],
            ]}
          />
          <IconGroup width={18} before={13} items={[['Auto', 'A']]} />
          <IconGroup
            width={106}
            before={4}
            items={[
              ['Layer 1', '1', 'on'],
              ['Layer 2', '2', 'on'],
              ['Layer 3', '3', 'on'],
              ['Layout Layer', 'L', 'on'],
              ['Project Layer', 'P', 'green'],
              ['Color', 'C'],
            ]}
          />
          <IconGroup width={18} before={4} dark small items={[['Layer Options', 'caret']]} />
        </SymbolBar>

        <Filters>
          {filters.map(name => (
            <Filter key={name}>
              <CheckBox type="checkbox" />
              {name}
            </Filter>
          ))}
        </Filters>

        <Workspace>
          <Page>
            <Score />
            <Pointer viewBox="0 0 38 38" aria-hidden="true">
              <circle cx="19" cy="19" r="18.500" fill="#ebf28c" />
              <path d="M15 13v11.500l2.600-2.300 1.900 4.300 2-.9-1.900-4.100h3.400z" fill="#fff" stroke="#333" strokeWidth="0.9" />
            </Pointer>
          </Page>
          <VerticalScroll>
            <VerticalThumb />
          </VerticalScroll>
        </Workspace>

        <HorizontalScroll>
          <Track $share={402} />
          <HorizontalThumb />
          <Track $share={435} />
        </HorizontalScroll>
      </Window>
    </Screen>
  </>
);

export default App;
